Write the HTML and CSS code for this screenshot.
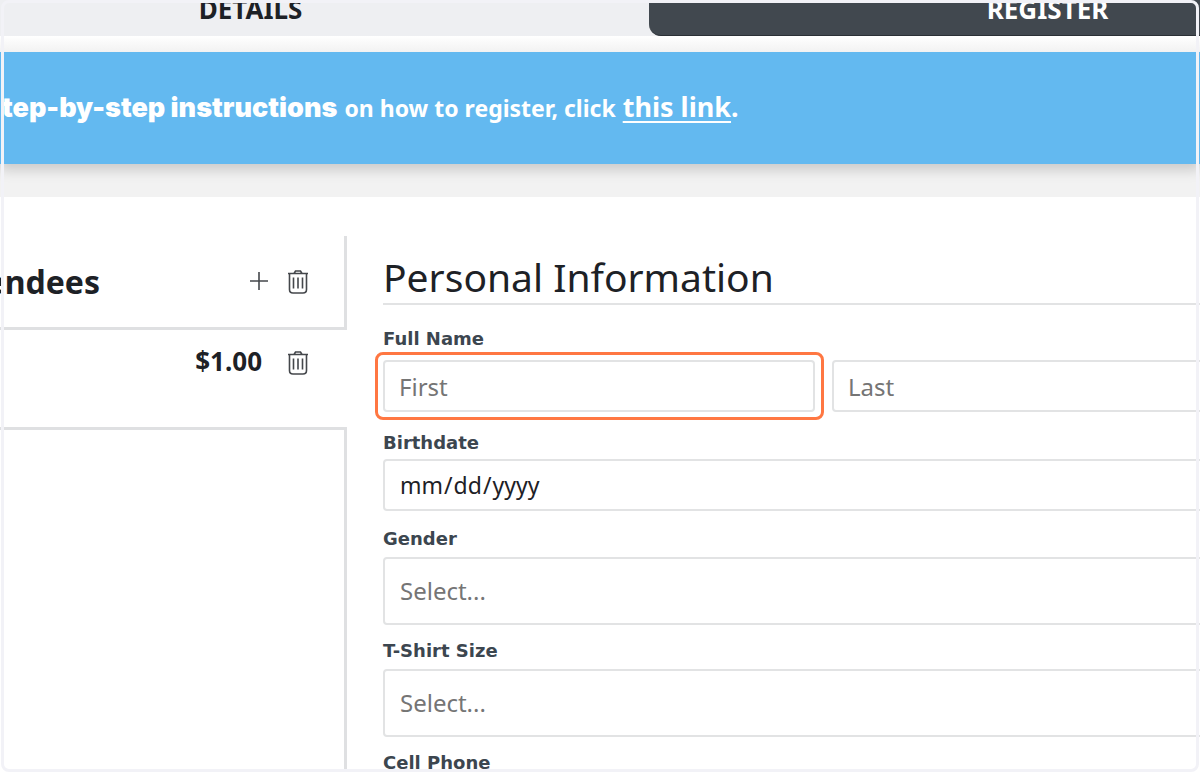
FILE: index.html
```html
<!DOCTYPE html>
<html lang="en">
<head>
<meta charset="utf-8">
<meta name="viewport" content="width=device-width, initial-scale=1">
<title>Register</title>
<link rel="stylesheet" href="styles.css">
</head>
<body>
<div class="page">
  <nav class="tabs">
    <a class="tab" href="#details">DETAILS</a>
    <a class="tab tab-active" href="#register">REGISTER</a>
  </nav>
  <div class="banner-area">
    <p class="banner"><strong>tep-by-step instructions</strong> <span class="banner-small">on how to register, click</span> <a class="banner-link" href="#help">this link</a>.</p>
  </div>
  <main class="content">
    <aside class="attendees">
      <header class="attendees-head">
        <h2 class="attendees-title">endees</h2>
        <button class="icon-button" type="button" aria-label="Add attendee">
          <svg class="icon" viewBox="0 0 24 26"><path d="M12 3v18M3 12h18"/></svg>
        </button>
        <button class="icon-button" type="button" aria-label="Remove all attendees">
          <svg class="icon" viewBox="0 0 24 26"><path d="M2 4.500h20M8 4.500l1.500-2.500h5l1.500 2.500M3.500 4.500v16q0 3.500 3.500 3.500h10q3.500 0 3.500-3.500v-16M7.500 8.500v11M12 8.500v11M16.500 8.500v11"/></svg>
        </button>
      </header>
      <div class="attendee">
        <span class="price">$1.00</span>
        <button class="icon-button" type="button" aria-label="Remove attendee">
          <svg class="icon" viewBox="0 0 24 26"><path d="M2 4.500h20M8 4.500l1.500-2.500h5l1.500 2.500M3.500 4.500v16q0 3.500 3.500 3.500h10q3.500 0 3.500-3.500v-16M7.500 8.500v11M12 8.500v11M16.500 8.500v11"/></svg>
        </button>
      </div>
      <div class="attendees-rest"></div>
    </aside>
    <form class="form">
      <h1 class="form-title">Personal Information</h1>
      <div class="field">
        <label class="label" for="first">Full Name</label>
        <div class="names">
          <div class="highlight"><input class="control" id="first" type="text" placeholder="First"></div>
          <input class="control" type="text" placeholder="Last" aria-label="Last name">
        </div>
      </div>
      <div class="field field-date">
        <label class="label" for="birthdate">Birthdate</label>
        <input class="control control-date" id="birthdate" type="date">
      </div>
      <div class="field">
        <label class="label" for="gender">Gender</label>
        <select class="control control-select" id="gender"><option>Select...</option></select>
      </div>
      <div class="field">
        <label class="label" for="shirt">T-Shirt Size</label>
        <select class="control control-select" id="shirt"><option>Select...</option></select>
      </div>
      <div class="field">
        <label class="label" for="phone">Cell Phone</label>
        <input class="control" id="phone" type="tel">
      </div>
    </form>
  </main>
  <div class="frame"></div>
</div>
</body>
</html>
```
FILE: styles.css
```css
* { box-sizing: border-box; }

body {
  margin: 0;
  background: #fff;
  color: #1d2126;
  font-family: "Noto Sans", sans-serif;
}

.page {
  position: relative;
  display: flex;
  flex-direction: column;
  height: 100vh;
  overflow: hidden;
}

.frame {
  position: absolute;
  inset: 0 1px;
  border: 3px solid #f2f2f7;
  border-radius: 8px;
  pointer-events: none;
}

.tabs {
  display: grid;
  grid-template-columns: 1fr 1fr;
  flex: none;
  margin: 0 -246px 0 -148px;
  background: #eeeff2;
}

.tab {
  height: 36px;
  color: #1d2126;
  font-size: 26px;
  font-weight: 700;
  line-height: 18px;
  text-align: center;
  text-decoration: none;
}

.tab-active {
  background: #41484f;
  border-bottom: 1px solid #2b3036;
  border-bottom-left-radius: 12px;
  color: #fff;
}

.banner-area {
  flex: none;
  padding: 16px 0 33px;
  background: linear-gradient(#fff, #f2f2f2 16px);
}

.banner {
  margin: 0;
  padding: 37px 0 39px 2px;
  background: #63b9f0;
  box-shadow: 0 6px 12px #0000002b;
  clip-path: inset(0 0 -33px 0);
  color: #fff;
  font-size: 27px;
  font-weight: 700;
  line-height: 36px;
  white-space: nowrap;
}

.banner > * { line-height: 1; }
.banner strong { font-family: Inter, sans-serif; font-weight: 900; }
.banner-small { font-size: 23px; }
.banner-link { color: inherit; text-underline-offset: 4px; }

.content {
  display: grid;
  grid-template-columns: 347px 1fr;
  column-gap: 36px;
  flex: 1;
  margin-right: -64px;
  padding-top: 39px;
}

.attendees { display: flex; flex-direction: column; }

.attendees-head,
.attendee {
  display: flex;
  justify-content: flex-end;
}

.attendees-head {
  align-items: center;
  gap: 15px;
  height: 94px;
  padding-right: 34px;
  border: solid #dfe0e2;
  border-width: 0 3px 3px 0;
}

.attendees-title {
  display: flex;
  justify-content: flex-end;
  width: 100px;
  margin: 0 auto 0 0;
  font-size: 32px;
  line-height: 40px;
}

.attendee {
  align-items: flex-start;
  gap: 24px;
  height: 97px;
  padding: 16px 37px 0 0;
}

.price { font-size: 26px; font-weight: 700; line-height: 30px; }

.attendees-rest {
  flex: 1;
  border: solid #dfe0e2;
  border-width: 3px 3px 0 0;
}

.icon-button {
  display: block;
  padding: 4px 0;
  border: 0;
  background: none;
}

.icon {
  display: block;
  width: 24px;
  height: 26px;
  fill: none;
  stroke: #44474b;
  stroke-width: 1.6;
}

.form-title {
  margin: 17px 0 24px;
  padding-bottom: 2px;
  border-bottom: 2px solid #e2e3e4;
  font-size: 39px;
  font-weight: 400;
  line-height: 48px;
}

.field { margin-bottom: 16px; }

.label {
  display: block;
  margin-bottom: 8px;
  color: #3c464f;
  font-family: "DejaVu Sans", sans-serif;
  font-size: 18px;
  font-weight: 700;
  line-height: 20px;
}

.names {
  display: grid;
  grid-template-columns: 1fr 1fr;
  gap: 17px;
  padding: 3px 0 5px;
}

.highlight {
  margin: -8px -9px -8px -8px;
  padding: 5px 6px 5px 5px;
  border: 3px solid #ff7742;
  border-radius: 8px;
}

.control {
  display: block;
  width: 100%;
  height: 52px;
  padding: 0 14px;
  border: 2px solid #e2e3e4;
  border-radius: 4px;
  background: #fff;
  color: #1d2126;
  font: 400 24px/32px "Noto Sans", sans-serif;
}

.control::placeholder { color: #757575; }

.field-date { margin-bottom: 18px; }
.field-date .label { margin-bottom: 6px; }
.control-date { font-size: 23px; }

.control-select {
  height: 68px;
  padding-left: 15px;
  appearance: none;
  color: #757575;
}
```
